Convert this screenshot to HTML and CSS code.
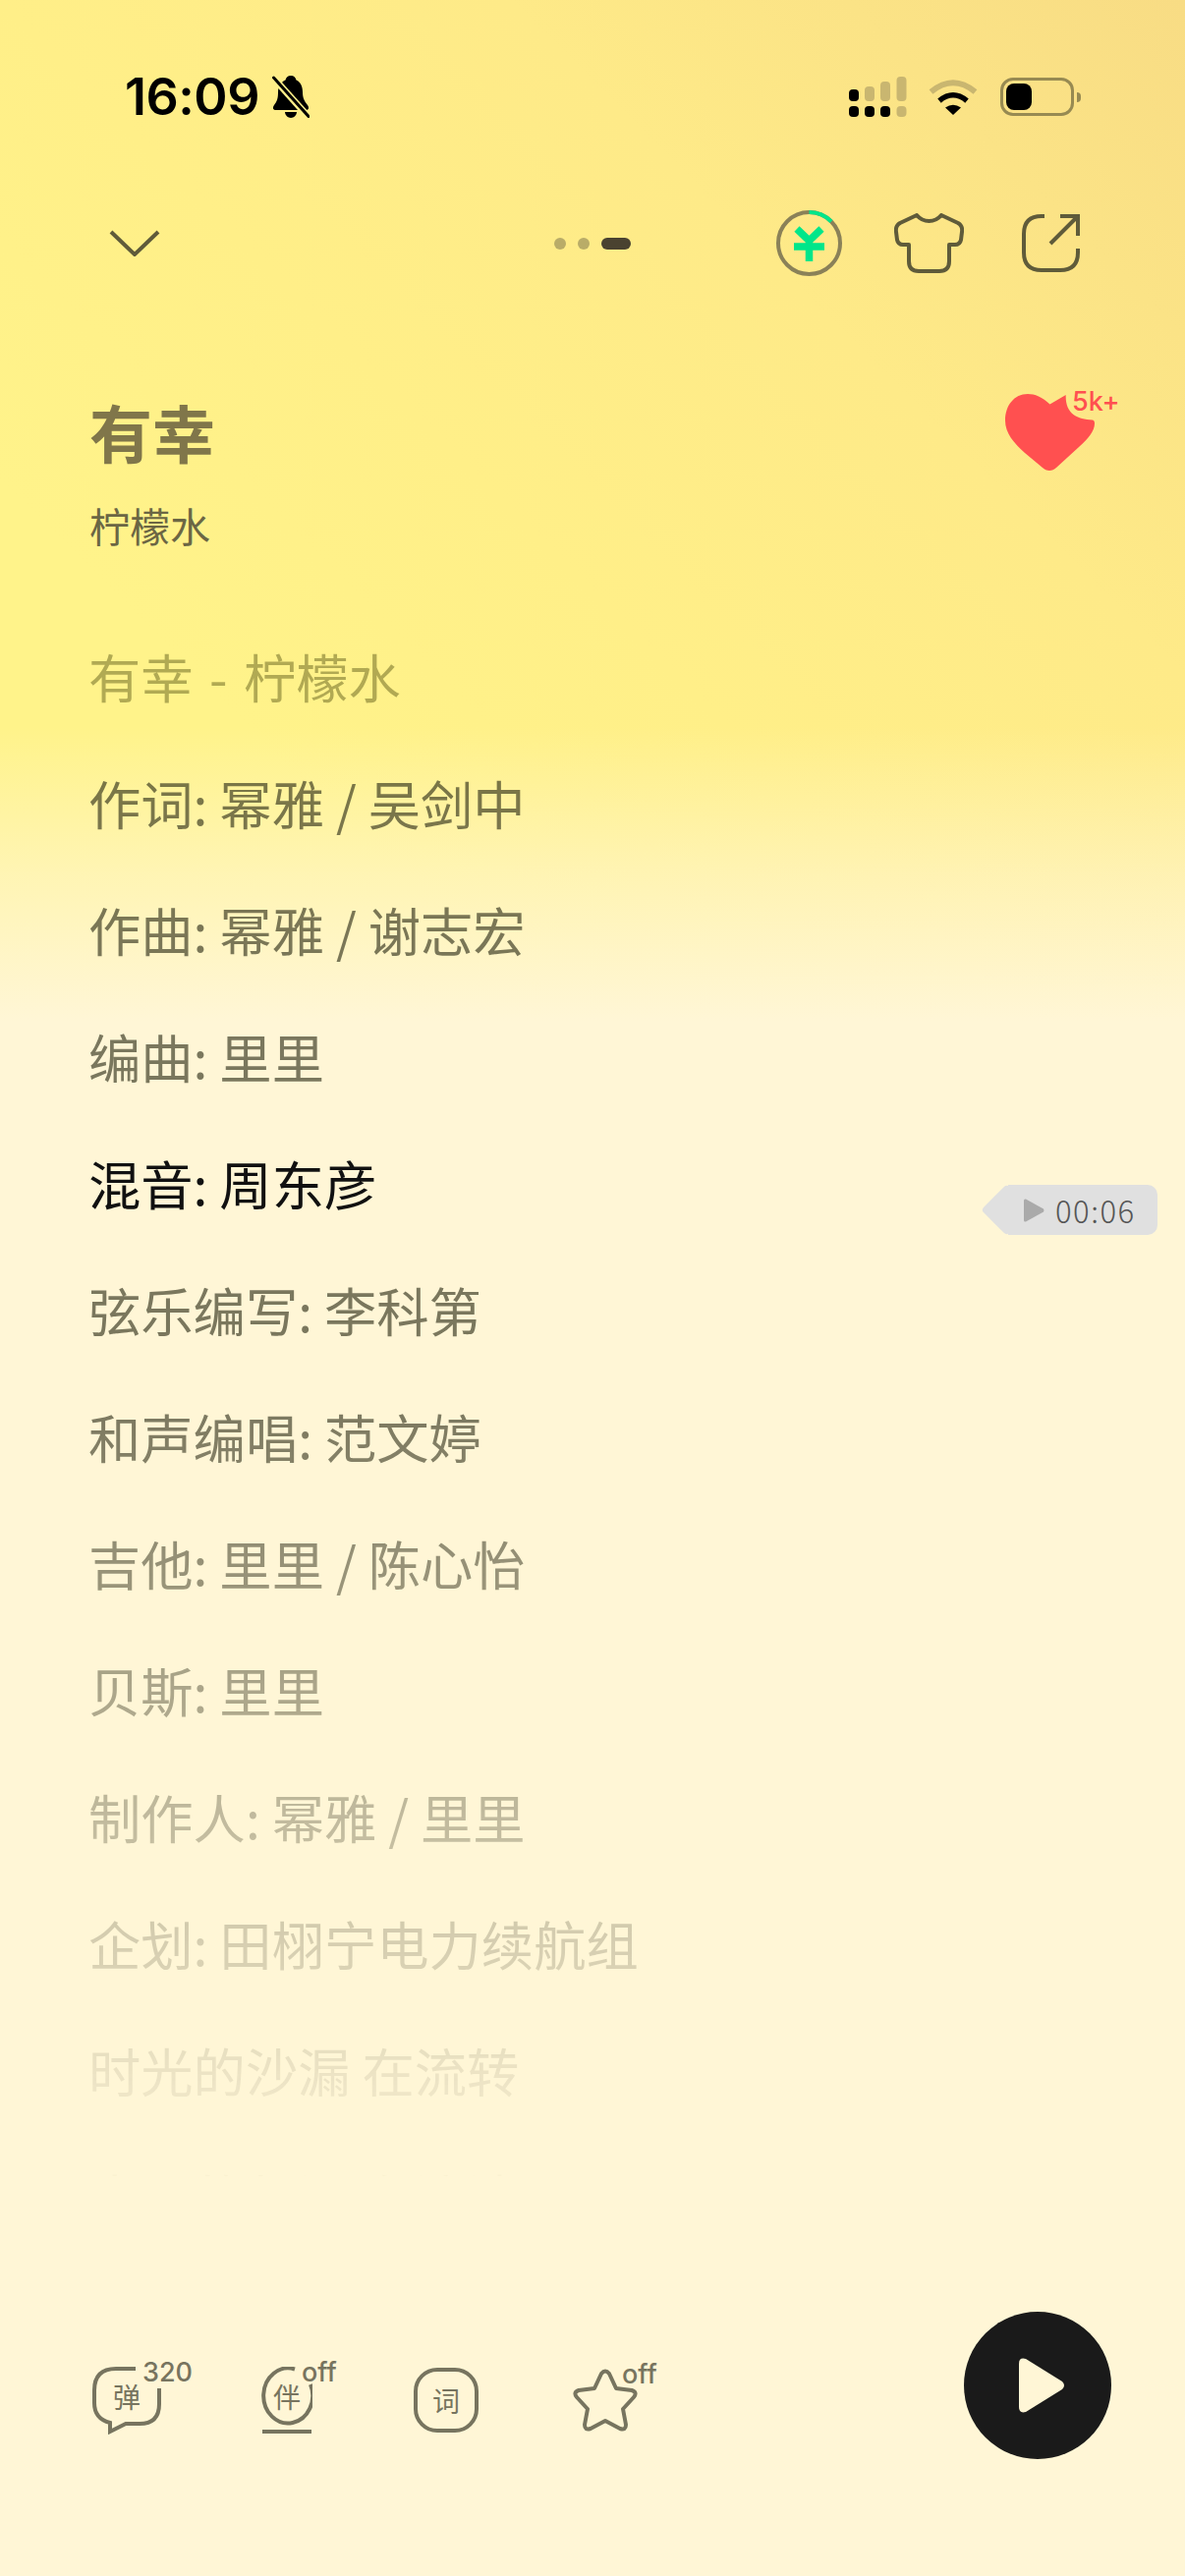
FILE: index.html
```html
<!DOCTYPE html>
<html lang="zh-CN">
<head>
    <meta charset="UTF-8">
    <meta name="viewport" content="width=device-width, initial-scale=1.0">
    <title>有幸 - 歌词</title>
    <link rel="stylesheet" href="styles.css">
</head>
<body>
    <div class="page">
        <!-- Status bar -->
        <div class="status-bar">
            <div class="status-left">
                <span class="status-time">16:09</span>
                <svg class="bell" width="38" height="43" viewBox="0 0 38 43">
                    <path d="M19 0c3 0 5 2 5.500 4.500C29 6.500 31 11 31 17c0 6 2 9 5 13 2 3 1 5-2 5H4c-3 0-4-2-2-5 3-4 4-7 4-13 0-6 3-10.500 7.500-12.500C14 2 16 0 19 0z" fill="#000"/>
                    <path d="M13 37h12c0 3-3 6-6 6s-6-3-6-6z" fill="#000"/>
                    <path d="M1 2L37 42" stroke="#fff08a" stroke-width="7"/>
                    <path d="M1.500 2L37 41.500" stroke="#000" stroke-width="3" stroke-linecap="round"/>
                </svg>
            </div>
            <div class="status-right">
                <svg width="59" height="41" viewBox="0 0 59 41">
                    <rect x="0" y="13" width="10" height="12" rx="4" fill="#000"/>
                    <rect x="16" y="10" width="10" height="15" rx="4" fill="#c9b670"/>
                    <rect x="32" y="5" width="10" height="20" rx="4" fill="#c9b670"/>
                    <rect x="48.500" y="0" width="10" height="25" rx="4" fill="#c9b670"/>
                    <rect x="0" y="30" width="10" height="11" rx="4" fill="#000"/>
                    <rect x="16" y="30" width="10" height="11" rx="4" fill="#000"/>
                    <rect x="32" y="30" width="10" height="11" rx="4" fill="#000"/>
                    <rect x="48.500" y="30" width="10" height="11" rx="4" fill="#c9b670"/>
                </svg>
                <svg class="wifi" width="50" height="37" viewBox="0 0 50 37">
                    <path d="M2.500 13.500Q25 -5 47.500 13.500" fill="none" stroke="#c9b670" stroke-width="6"/>
                    <path d="M11 22.500Q25 11 39 22.500" fill="none" stroke="#000" stroke-width="5.500"/>
                    <path d="M25 37L17 29.500Q25 24 33 29.500Z" fill="#000"/>
                </svg>
                <div class="battery">
                    <div class="battery-fill"></div>
                </div>
                <div class="battery-nub"></div>
            </div>
        </div>

        <!-- Top nav -->
        <div class="top-nav">
            <svg class="chevron" width="52" height="27" viewBox="0 0 52 27">
                <path d="M2 2L26 25L50 2" fill="none" stroke="#5f5b3a" stroke-width="4"/>
            </svg>
            <div class="page-dots">
                <span class="page-dot"></span>
                <span class="page-dot"></span>
                <span class="page-pill"></span>
            </div>
            <div class="nav-actions">
                <svg width="67" height="67" viewBox="0 0 67 67">
                    <circle cx="33.500" cy="33.500" r="31.500" fill="none" stroke="#8a8158" stroke-width="4"/>
                    <path d="M33.500 2A31.500 31.500 0 0 1 56 11.500" fill="none" stroke="#00e68a" stroke-width="4"/>
                    <path d="M21 19L33.500 31L46 19M18 37H49M33.500 31V52" fill="none" stroke="#00e68a" stroke-width="7.500"/>
                </svg>
                <svg class="shirt" width="71" height="61" viewBox="0 0 71 61">
                    <path d="M23 2Q28 8 35.500 8Q43 8 48 2L65 10Q70 13 69 19L68 27Q67 32 62 32H56V49Q56 59 46 59H25Q15 59 15 49V32H9Q4 32 3 27L2 19Q1 13 6 10Z" fill="none" stroke="#5f5b3a" stroke-width="4" stroke-linejoin="round"/>
                </svg>
                <svg width="59" height="59" viewBox="0 0 59 59">
                    <path d="M23 2H20Q2 2 2 20V39Q2 57 20 57H39Q57 57 57 39V35" fill="none" stroke="#5f5b3a" stroke-width="4"/>
                    <path d="M29 30L56 3M39 2H57V22" fill="none" stroke="#5f5b3a" stroke-width="4"/>
                </svg>
            </div>
        </div>

        <!-- Song title -->
        <div class="song-header">
            <div>
                <h1 class="song-title">有幸</h1>
                <p class="song-artist">柠檬水</p>
            </div>
            <div class="like">
                <svg width="91" height="78" viewBox="0 0 91 78">
                    <path d="M45.500 10.500C38 3 30 0 23 0C9 0 0 12 0 27C0 40 9 50 20 60L38 75C42 79 48 79 52 75L75 54C84 46 91 38 91 30C91 28 90.500 27 89 26.500C73 26 61 20 61.700 1Z" fill="#ff5050"/>
                </svg>
                <span class="like-count">5k+</span>
            </div>
        </div>

        <!-- Lyrics -->
        <div class="lyrics">
            <p class="lyric lyric-first">有幸 - 柠檬水</p>
            <p class="lyric">作词: 幂雅 / 吴剑中</p>
            <p class="lyric">作曲: 幂雅 / 谢志宏</p>
            <p class="lyric">编曲: 里里</p>
            <p class="lyric lyric-current">混音: 周东彦</p>
            <p class="lyric">弦乐编写: 李科第</p>
            <p class="lyric">和声编唱: 范文婷</p>
            <p class="lyric">吉他: 里里 / 陈心怡</p>
            <p class="lyric">贝斯: 里里</p>
            <p class="lyric">制作人: 幂雅 / 里里</p>
            <p class="lyric">企划: 田栩宁电力续航组</p>
            <p class="lyric">时光的沙漏 在流转</p>
            <p class="lyric">岁月的长河 在流淌</p>
        </div>

        <div class="time-tag">
            <svg width="21" height="24" viewBox="0 0 21 24">
                <path d="M0 2Q0 0 2 0.500L20 10.500Q21 12 20 13.500L2 23.500Q0 24 0 22Z" fill="#aaaaaa"/>
            </svg>
            <span>00:06</span>
        </div>

        <!-- Bottom toolbar -->
        <div class="toolbar">
            <div class="tool tool-danmu">
                <svg width="70" height="69" viewBox="0 0 70 69">
                    <path d="M44 2H24Q2 2 2 24V37Q2 53 18 57V66L34 58H48Q68 58 68 38V22" fill="none" stroke="#77745f" stroke-width="4"/>
                </svg>
                <span class="tool-char">弹</span>
                <span class="tool-badge">320</span>
            </div>
            <div class="tool tool-accomp">
                <svg width="54" height="68" viewBox="0 0 54 68">
                    <path d="M36 2.500A25 28 0 1 0 52 18" fill="none" stroke="#77745f" stroke-width="4"/>
                    <path d="M3 66H53" stroke="#77745f" stroke-width="4"/>
                </svg>
                <span class="tool-char">伴</span>
                <span class="tool-badge">off</span>
            </div>
            <div class="tool tool-words">
                <span class="tool-char">词</span>
            </div>
            <div class="tool tool-star">
                <svg width="66" height="64" viewBox="0 0 66 64">
                    <path d="M29 5Q33 0 37 5L44 20L60 22Q66 24 62 29L51 41L54 57Q54 63 48 61L33 53L18 61Q12 63 12 57L15 41L4 29Q0 24 6 22L22 20Z" fill="none" stroke="#77745f" stroke-width="4" stroke-linejoin="round"/>
                </svg>
                <span class="tool-badge">off</span>
            </div>
            <div class="play-btn">
                <svg width="47" height="56" viewBox="0 0 47 56">
                    <path d="M0 6Q0 -1 7 1L44 24Q48 28 44 32L7 55Q0 57 0 50Z" fill="#fff6d6"/>
                </svg>
            </div>
        </div>
    </div>
</body>
</html>
```
FILE: styles.css
```css
* {
    box-sizing: border-box;
    margin: 0;
    font-family: 'Noto Sans CJK SC', sans-serif;
}

body {
    background: #fff6d6;
}

.page {
    position: relative;
    width: 1206px;
    height: 2622px;
    overflow: hidden;
    display: flex;
    flex-direction: column;
    background:
        linear-gradient(to bottom, rgba(255, 246, 214, 0) 740px, rgba(255, 246, 214, 0.55) 890px, #fff6d6 1040px),
        linear-gradient(225deg, #f8dc84 0, #feea88 488px, #ffef88 853px, #fff38a 1200px);
}

/* status bar */
.status-bar {
    display: flex;
    justify-content: space-between;
    align-items: center;
    height: 43px;
    margin-top: 77px;
    padding: 0 106px 0 127px;
}

.status-left,
.status-right {
    display: flex;
    align-items: center;
}

.status-time {
    font-family: 'Inter', sans-serif;
    font-size: 52px;
    font-weight: 600;
    line-height: 43px;
    letter-spacing: -0.5px;
    color: #000;
}

.bell {
    margin-left: 13px;
}

.wifi {
    margin-left: 22px;
}

.battery {
    width: 75px;
    height: 39px;
    margin-left: 23px;
    padding: 3px;
    border: 3px solid #978a52;
    border-radius: 13px;
}

.battery-fill {
    width: 26px;
    height: 27px;
    background: #000;
    border-radius: 8px;
}

.battery-nub {
    width: 4px;
    height: 10px;
    margin-left: 3px;
    background: #978a52;
    border-radius: 0 5px 5px 0;
}

/* top nav */
.top-nav {
    display: flex;
    align-items: center;
    height: 67px;
    margin-top: 94px;
    padding: 0 107px 0 111px;
}

.page-dots {
    display: flex;
    align-items: center;
    gap: 12px;
    margin-left: 401px;
}

.page-dot {
    width: 12px;
    height: 12px;
    background: #b9ac68;
    border-radius: 50%;
}

.page-pill {
    width: 30px;
    height: 12px;
    background: #4a4230;
    border-radius: 6px;
}

.nav-actions {
    display: flex;
    align-items: center;
    margin-left: auto;
}

.shirt {
    margin: 0 59px 0 53px;
}

/* header */
.song-header {
    display: flex;
    justify-content: space-between;
    margin-top: 117px;
    padding: 0 92px 0 91px;
}

.song-title {
    font-size: 64px;
    font-weight: 700;
    line-height: 80px;
    color: #80764a;
}

.song-artist {
    margin-top: 26px;
    font-size: 41px;
    line-height: 60px;
    color: #6b6644;
}

.like {
    position: relative;
    width: 91px;
    height: 78px;
    margin-top: 3px;
}

.like-count {
    position: absolute;
    left: 68px;
    top: -6px;
    font-family: 'Inter', sans-serif;
    font-size: 27px;
    font-weight: 500;
    line-height: 28px;
    white-space: nowrap;
    color: #ff5050;
}

/* lyrics */
.lyrics {
    flex: none;
    height: 1592px;
    margin-top: 59px;
    padding: 0 90px;
    overflow: hidden;
    -webkit-mask-image: linear-gradient(to bottom, #000 800px, rgba(0, 0, 0, 0.14) 1490px, rgba(0, 0, 0, 0.03) 1592px);
    mask-image: linear-gradient(to bottom, #000 800px, rgba(0, 0, 0, 0.14) 1490px, rgba(0, 0, 0, 0.03) 1592px);
}

.lyric {
    font-size: 53.300px;
    line-height: 129px;
    white-space: nowrap;
    color: rgba(40, 40, 20, 0.62);
}

.lyric-first {
    word-spacing: 4.500px;
    color: rgba(60, 60, 0, 0.4);
}

.lyric-current {
    color: #111;
}

.time-tag {
    position: absolute;
    left: 1026px;
    top: 1206px;
    display: flex;
    align-items: center;
    gap: 11px;
    width: 152px;
    height: 51px;
    padding-left: 16px;
    font-family: 'Inter', sans-serif;
    font-size: 31px;
    font-weight: 300;
    letter-spacing: 1.5px;
    color: #555;
    background: #e0e0e0;
    border-radius: 0 10px 10px 0;
}

.time-tag::before {
    content: '';
    position: absolute;
    left: -20px;
    top: 7px;
    width: 37px;
    height: 37px;
    background: #e0e0e0;
    border-radius: 4px;
    transform: rotate(45deg);
}

.time-tag svg,
.time-tag span {
    position: relative;
}

/* bottom toolbar */
.toolbar {
    display: flex;
    align-items: center;
    height: 150px;
    margin-top: 138px;
    padding-left: 94px;
    color: #77745f;
}

.tool {
    position: relative;
    display: flex;
    margin-top: 30px;
}

.tool-danmu {
    width: 70px;
}

.tool-accomp {
    width: 54px;
    margin-left: 100px;
}

.tool-words {
    justify-content: center;
    align-items: center;
    width: 66px;
    height: 66px;
    margin-left: 103px;
    border: 4px solid #77745f;
    border-radius: 24px;
}

.tool-star {
    width: 66px;
    margin-left: 96px;
}

.tool-char {
    font-size: 28px;
    line-height: 30px;
}

.tool-danmu .tool-char {
    position: absolute;
    left: 21px;
    top: 15px;
}

.tool-accomp .tool-char {
    position: absolute;
    left: 14px;
    top: 15px;
}

.tool-badge {
    position: absolute;
    top: -9px;
    font-family: 'Inter', sans-serif;
    font-size: 27px;
    font-weight: 500;
    line-height: 30px;
    white-space: nowrap;
}

.tool-danmu .tool-badge {
    left: 51px;
}

.tool-accomp .tool-badge {
    left: 43px;
}

.tool-star .tool-badge {
    left: 50px;
}

.play-btn {
    display: flex;
    justify-content: center;
    align-items: center;
    width: 150px;
    height: 150px;
    margin-left: auto;
    margin-right: 75px;
    padding-left: 8px;
    background: #1a1a1a;
    border-radius: 50%;
}
```
